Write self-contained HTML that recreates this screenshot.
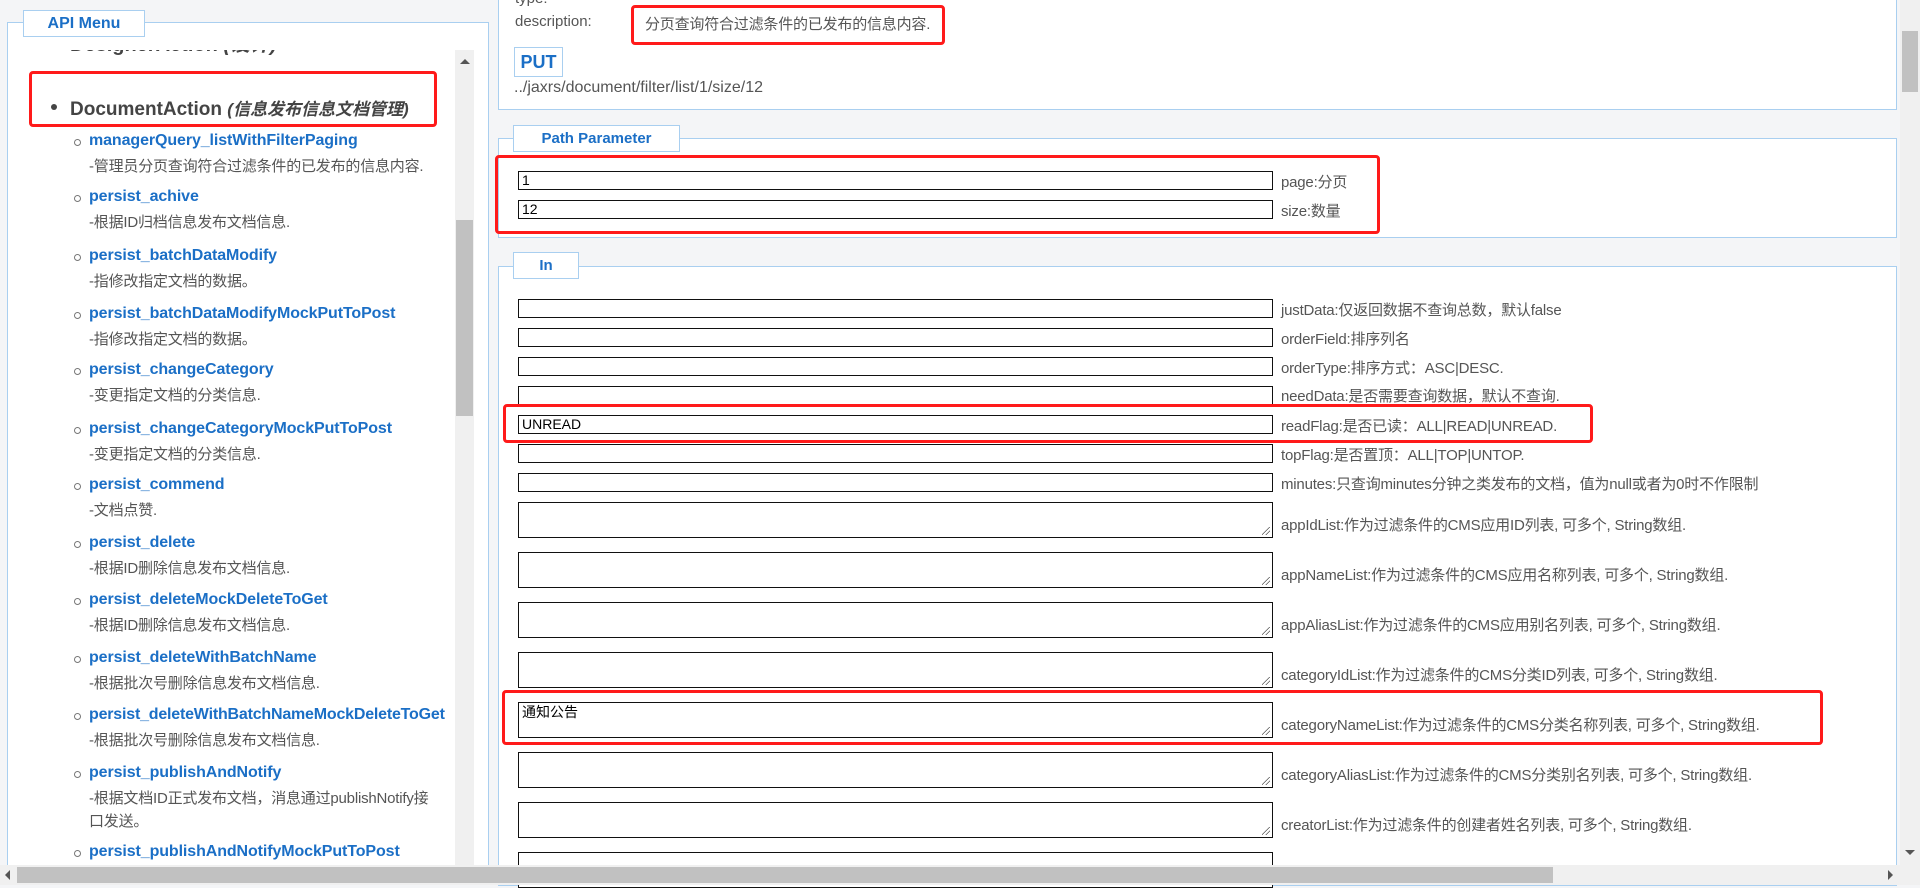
<!DOCTYPE html>
<html><head><meta charset="utf-8"><style>
*{box-sizing:border-box;margin:0;padding:0}
body{width:1920px;height:885px;overflow:hidden;background:#f4f5f7;font-family:"Liberation Sans","Noto Sans CJK SC",sans-serif;position:relative;color:#444}
.abs{position:absolute}
.leftfs{left:7px;top:22px;width:482px;height:860px;border:1px solid #a9cff0;border-bottom:none;background:#fff}
.legend{position:absolute;border:1px solid #a9cff0;background:#fff;color:#1b6fc6;font-weight:bold;text-align:center}
.clip{left:8px;top:50px;width:447px;height:815px;overflow:hidden;background:#fff}
.lk{position:absolute;left:81px;color:#1b6fc6;font-weight:bold;font-size:16px;white-space:nowrap;letter-spacing:-0.1px}
.ds{position:absolute;left:81px;color:#555;font-size:15px;white-space:nowrap;letter-spacing:-0.2px}
.ci{position:absolute;left:66px;width:7px;height:7px;border:1.3px solid #777;border-radius:50%}
.sec{position:absolute;left:498px;width:1399px;background:#fff;border:1px solid #a9cff0}
.inp{position:absolute;left:518px;width:755px;height:19px;border:1.5px solid #111;background:#fff;font-size:14px;color:#000;padding-left:3px;line-height:16px}
.ta{position:absolute;left:518px;width:755px;height:36px;border:1.5px solid #111;background:#fff;font-size:14px;color:#000;padding-left:3px;line-height:18px}
.ta:after{content:"";position:absolute;right:2px;bottom:2px;width:8px;height:8px;background:linear-gradient(135deg,transparent 45%,#555 45%,#555 52%,transparent 52%,transparent 70%,#555 70%,#555 77%,transparent 77%)}
.lb{position:absolute;left:1281px;font-size:15px;color:#555;white-space:nowrap;letter-spacing:-0.2px}
.red{position:absolute;border:3px solid #ff1a1a;border-radius:4px}
</style></head><body>

<!-- left panel -->
<div class="abs leftfs"></div>
<div class="legend" style="left:23px;top:10px;width:122px;height:27px;font-size:16px;line-height:25px">API Menu</div>
<div class="abs clip">
  <div style="position:absolute;left:62px;top:-22px;font-size:20px;font-weight:bold;color:#444">DesignerAction <i>(设计)</i></div>
  <div style="position:absolute;left:43px;top:54px;width:6px;height:6px;background:#444;border-radius:50%"></div>
  <div style="position:absolute;left:62px;top:45px;font-size:19px;font-weight:bold;color:#444;white-space:nowrap">DocumentAction <i style="font-size:17px">(信息发布信息文档管理)</i></div>

  <div class="ci" style="top:89px"></div><div class="lk" style="top:82px">managerQuery_listWithFilterPaging</div><div class="ds" style="top:105px">-管理员分页查询符合过滤条件的已发布的信息内容.</div>
  <div class="ci" style="top:145px"></div><div class="lk" style="top:138px">persist_achive</div><div class="ds" style="top:161px">-根据ID归档信息发布文档信息.</div>
  <div class="ci" style="top:204px"></div><div class="lk" style="top:197px">persist_batchDataModify</div><div class="ds" style="top:220px">-指修改指定文档的数据。</div>
  <div class="ci" style="top:262px"></div><div class="lk" style="top:255px">persist_batchDataModifyMockPutToPost</div><div class="ds" style="top:278px">-指修改指定文档的数据。</div>
  <div class="ci" style="top:318px"></div><div class="lk" style="top:311px">persist_changeCategory</div><div class="ds" style="top:334px">-变更指定文档的分类信息.</div>
  <div class="ci" style="top:377px"></div><div class="lk" style="top:370px">persist_changeCategoryMockPutToPost</div><div class="ds" style="top:393px">-变更指定文档的分类信息.</div>
  <div class="ci" style="top:433px"></div><div class="lk" style="top:426px">persist_commend</div><div class="ds" style="top:449px">-文档点赞.</div>
  <div class="ci" style="top:491px"></div><div class="lk" style="top:484px">persist_delete</div><div class="ds" style="top:507px">-根据ID删除信息发布文档信息.</div>
  <div class="ci" style="top:548px"></div><div class="lk" style="top:541px">persist_deleteMockDeleteToGet</div><div class="ds" style="top:564px">-根据ID删除信息发布文档信息.</div>
  <div class="ci" style="top:606px"></div><div class="lk" style="top:599px">persist_deleteWithBatchName</div><div class="ds" style="top:622px">-根据批次号删除信息发布文档信息.</div>
  <div class="ci" style="top:663px"></div><div class="lk" style="top:656px;letter-spacing:-0.2px">persist_deleteWithBatchNameMockDeleteToGet</div><div class="ds" style="top:679px">-根据批次号删除信息发布文档信息.</div>
  <div class="ci" style="top:721px"></div><div class="lk" style="top:714px">persist_publishAndNotify</div><div class="ds" style="top:737px">-根据文档ID正式发布文档，消息通过publishNotify接</div><div class="ds" style="top:760px">口发送。</div>
  <div class="ci" style="top:800px"></div><div class="lk" style="top:793px">persist_publishAndNotifyMockPutToPost</div>
</div>
<div class="red" style="left:29px;top:71px;width:408px;height:56px"></div>
<!-- left scrollbar -->
<div class="abs" style="left:455px;top:50px;width:19px;height:815px;background:#f0f0f0"></div>
<div class="abs" style="left:456px;top:220px;width:17px;height:196px;background:#c1c1c1"></div>
<div class="abs" style="left:460px;top:59px;width:0;height:0;border-left:5px solid transparent;border-right:5px solid transparent;border-bottom:5px solid #555"></div>

<!-- top section -->
<div class="sec" style="top:-2px;height:112px"></div>
<div class="abs" style="left:515px;top:-10px;font-size:15px;color:#555">type:</div>
<div class="abs" style="left:515px;top:13px;font-size:15px;color:#555">description:</div>
<div class="abs" style="left:645px;top:13px;font-size:15px;color:#555;letter-spacing:-0.2px">分页查询符合过滤条件的已发布的信息内容.</div>
<div class="red" style="left:631px;top:5px;width:314px;height:40px"></div>
<div class="legend" style="left:514px;top:47px;width:49px;height:30px;font-size:18px;line-height:28px">PUT</div>
<div class="abs" style="left:514px;top:79px;font-size:16px;color:#555">../jaxrs/document/filter/list/1/size/12</div>

<!-- path parameter -->
<div class="sec" style="top:138px;height:100px"></div>
<div class="legend" style="left:513px;top:125px;width:167px;height:27px;font-size:15px;line-height:25px">Path Parameter</div>
<div class="inp" style="top:171px">1</div><div class="lb" style="top:171px">page:分页</div>
<div class="inp" style="top:200px">12</div><div class="lb" style="top:200px">size:数量</div>
<div class="red" style="left:495px;top:155px;width:885px;height:79px"></div>

<!-- In -->
<div class="sec" style="top:266px;height:620px"></div>
<div class="legend" style="left:513px;top:252px;width:66px;height:27px;font-size:15px;line-height:25px">In</div>
<div class="inp" style="top:299px"></div><div class="lb" style="top:299px">justData:仅返回数据不查询总数，默认false</div>
<div class="inp" style="top:328px"></div><div class="lb" style="top:328px">orderField:排序列名</div>
<div class="inp" style="top:357px"></div><div class="lb" style="top:357px">orderType:排序方式：ASC|DESC.</div>
<div class="inp" style="top:386px"></div><div class="lb" style="top:385px">needData:是否需要查询数据，默认不查询.</div>
<div class="inp" style="top:415px">UNREAD</div><div class="lb" style="top:415px">readFlag:是否已读：ALL|READ|UNREAD.</div>
<div class="inp" style="top:444px"></div><div class="lb" style="top:444px">topFlag:是否置顶：ALL|TOP|UNTOP.</div>
<div class="inp" style="top:473px"></div><div class="lb" style="top:473px">minutes:只查询minutes分钟之类发布的文档，值为null或者为0时不作限制</div>
<div class="ta" style="top:502px"></div><div class="lb" style="top:514px">appIdList:作为过滤条件的CMS应用ID列表, 可多个, String数组.</div>
<div class="ta" style="top:552px"></div><div class="lb" style="top:564px">appNameList:作为过滤条件的CMS应用名称列表, 可多个, String数组.</div>
<div class="ta" style="top:602px"></div><div class="lb" style="top:614px">appAliasList:作为过滤条件的CMS应用别名列表, 可多个, String数组.</div>
<div class="ta" style="top:652px"></div><div class="lb" style="top:664px">categoryIdList:作为过滤条件的CMS分类ID列表, 可多个, String数组.</div>
<div class="ta" style="top:702px">通知公告</div><div class="lb" style="top:714px">categoryNameList:作为过滤条件的CMS分类名称列表, 可多个, String数组.</div>
<div class="ta" style="top:752px"></div><div class="lb" style="top:764px">categoryAliasList:作为过滤条件的CMS分类别名列表, 可多个, String数组.</div>
<div class="ta" style="top:802px"></div><div class="lb" style="top:814px">creatorList:作为过滤条件的创建者姓名列表, 可多个, String数组.</div>
<div class="ta" style="top:852px"></div>
<div class="red" style="left:503px;top:404px;width:1090px;height:39px"></div>
<div class="red" style="left:502px;top:690px;width:1321px;height:55px"></div>

<!-- right scrollbar -->
<div class="abs" style="left:1900px;top:0;width:20px;height:865px;background:#f0f0f0"></div>
<div class="abs" style="left:1902px;top:31px;width:16px;height:61px;background:#c1c1c1"></div>
<div class="abs" style="left:1905px;top:850px;width:0;height:0;border-left:5px solid transparent;border-right:5px solid transparent;border-top:5px solid #555"></div>
<!-- bottom scrollbar -->
<div class="abs" style="left:0;top:865px;width:1920px;height:20px;background:#f0f0f0"></div>
<div class="abs" style="left:17px;top:867px;width:1536px;height:16px;background:#c1c1c1"></div>
<div class="abs" style="left:5px;top:870px;width:0;height:0;border-top:5px solid transparent;border-bottom:5px solid transparent;border-right:5px solid #555"></div>
<div class="abs" style="left:1888px;top:870px;width:0;height:0;border-top:5px solid transparent;border-bottom:5px solid transparent;border-left:5px solid #555"></div>
</body></html>
